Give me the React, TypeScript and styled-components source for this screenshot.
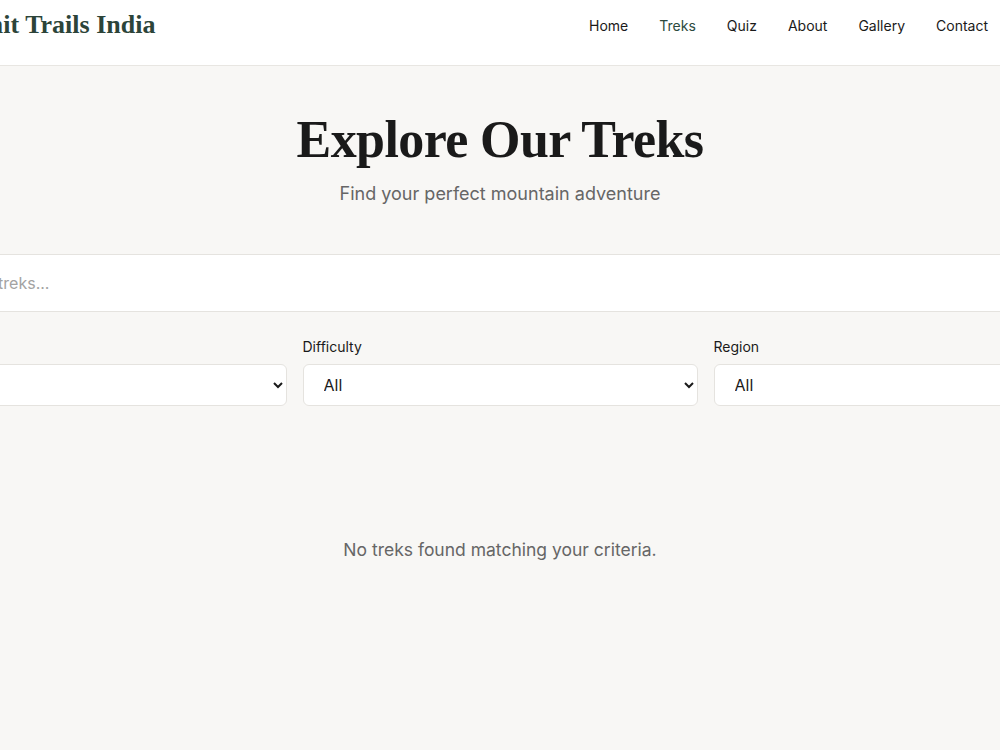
import React from "react";
import styled, { createGlobalStyle } from "styled-components";

const GlobalStyle = createGlobalStyle`
  html, body {
    margin: 0;
    padding: 0;
    background: #f8f7f5;
    overflow-x: hidden;
  }
  body {
    font-family: Inter, "Noto Sans", sans-serif;
    color: #1a1a1a;
  }
  * { box-sizing: border-box; }
`;

const Page = styled.div`
  min-height: 750px;
  background: #f8f7f5;
`;

const Header = styled.header`
  background: #ffffff;
  border-bottom: 1px solid #e8e6e2;
  display: flex;
  justify-content: center;
  overflow: hidden;
`;

const Wide = styled.div`
  width: 1217px;
  flex-shrink: 0;
`;

const HeaderInner = styled.div`
  width: 1138px;
  flex-shrink: 0;
  height: 65px;
  padding: 0 81px 15px 0;
  display: flex;
  align-items: center;
  justify-content: space-between;
`;

const Logo = styled.a`
  font-family: "Liberation Serif", "DejaVu Serif", serif;
  font-weight: 700;
  font-size: 26px;
  color: #2c4439;
  text-decoration: none;
  white-space: nowrap;
`;

const Nav = styled.nav`
  display: flex;
  gap: 31px;
`;

const NavLink = styled.a<{ $active?: boolean }>`
  font-size: 14px;
  color: ${(p) => (p.$active ? "#2c4a3e" : "#1a1a1a")};
  text-decoration: none;
`;

const Hero = styled.section`
  text-align: center;
  padding: 43px 0 50px;
`;

const Title = styled.h1`
  margin: 0;
  font-family: "Liberation Serif", "DejaVu Serif", serif;
  font-weight: 700;
  font-size: 52px;
  letter-spacing: -0.6px;
  line-height: 1.2;
  color: #1a1a1a;
`;

const Subtitle = styled.p`
  margin: 12px 0 0;
  font-size: 18px;
  color: #666666;
`;

const Strip = styled.div`
  display: flex;
  justify-content: center;
  overflow: hidden;
`;

const SearchWrap = styled.div`
  position: relative;
`;

const SearchIcon = styled.span`
  position: absolute;
  left: 18px;
  top: 50%;
  transform: translateY(-50%);
  display: flex;
  color: #999;
`;

const SearchInput = styled.input`
  width: 100%;
  height: 58px;
  padding: 0 16px 0 48px;
  border: 1px solid #e5e3df;
  border-radius: 8px;
  background: #ffffff;
  font-family: Inter, sans-serif;
  font-size: 16px;
  color: #1a1a1a;
  outline: none;
  &::placeholder { color: #a3a3a3; }
`;

const Filters = styled(Wide)`
  display: grid;
  grid-template-columns: repeat(3, 1fr);
  gap: 16px;
  margin-top: 26px;
`;

const Field = styled.label`
  display: flex;
  flex-direction: column;
  gap: 8px;
`;

const FieldLabel = styled.span`
  font-size: 14px;
  color: #1a1a1a;
  line-height: 18px;
`;

const Select = styled.select`
  height: 42px;
  padding: 0 16px;
  border: 1px solid #e5e3df;
  border-radius: 6px;
  background: #ffffff;
  font-family: Inter, sans-serif;
  font-size: 16px;
  color: #1a1a1a;
  outline: none;
`;

const Empty = styled.p`
  margin: 0;
  padding: 133px 0 0;
  text-align: center;
  font-size: 17.5px;
  color: #666666;
`;

const links = ["Home", "Treks", "Quiz", "About", "Gallery", "Contact"];

export default function App() {
  return (
    <Page>
      <GlobalStyle />
      <Header>
        <HeaderInner>
          <Logo href="#">Summit Trails India</Logo>
          <Nav>
            {links.map((l) => (
              <NavLink key={l} href="#" $active={l === "Treks"}>
                {l}
              </NavLink>
            ))}
          </Nav>
        </HeaderInner>
      </Header>
      <Hero>
        <Title>Explore Our Treks</Title>
        <Subtitle>Find your perfect mountain adventure</Subtitle>
      </Hero>
      <Strip>
        <Wide>
          <SearchWrap>
            <SearchIcon>
              <svg width="18" height="18" viewBox="0 0 24 24" fill="none" stroke="currentColor" strokeWidth="2">
                <circle cx="11" cy="11" r="7" />
                <path d="M20 20l-4-4" />
              </svg>
            </SearchIcon>
            <SearchInput placeholder="Search treks..." />
          </SearchWrap>
        </Wide>
      </Strip>
      <Strip>
        <Filters>
          <Field>
            <FieldLabel>Duration</FieldLabel>
            <Select defaultValue="all">
              <option value="all">All</option>
            </Select>
          </Field>
          <Field>
            <FieldLabel>Difficulty</FieldLabel>
            <Select defaultValue="all">
              <option value="all">All</option>
              <option>Easy</option>
              <option>Moderate</option>
              <option>Difficult</option>
            </Select>
          </Field>
          <Field>
            <FieldLabel>Region</FieldLabel>
            <Select defaultValue="all">
              <option value="all">All</option>
            </Select>
          </Field>
        </Filters>
      </Strip>
      <Empty>No treks found matching your criteria.</Empty>
    </Page>
  );
}
